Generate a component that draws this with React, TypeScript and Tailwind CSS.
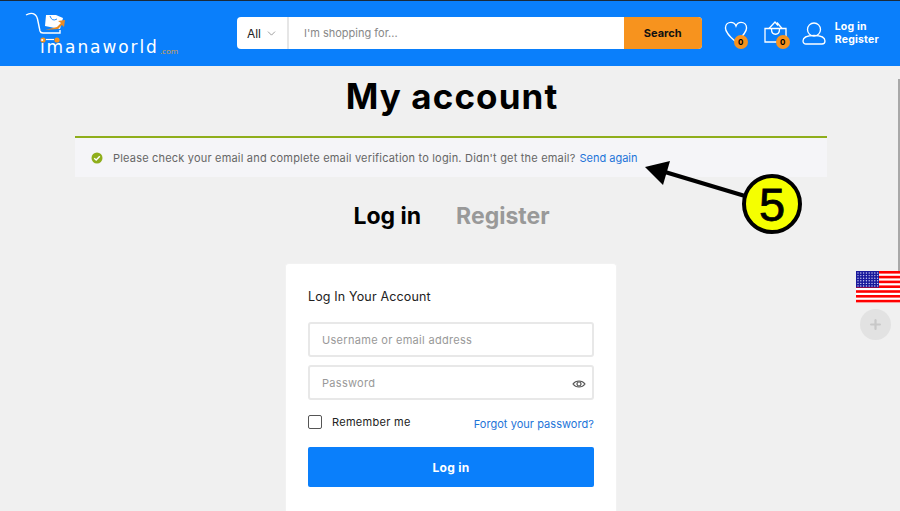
import React from "react";
import { ChevronDown, Plus } from "lucide-react";

function Logo() {
  return (
    <div className="relative w-[155px] h-[56px]">
      <svg width="45" height="40" viewBox="0 0 45 40" className="absolute left-0 top-0">
        <path d="M1 9 C6 6 11 7 12.5 13 L15 25 Q15.5 27 18 27 H35 V24" fill="none" stroke="#fff" strokeWidth="1.4" />
        <path d="M21 9 L31 9 L38 12 L35 23 L20 20 Z" fill="#fff" />
        <path d="M25 10 Q27 16 32 13" fill="none" stroke="#0a7ffb" strokeWidth="0.9" />
        <path d="M20 24 L32 21 L36 17 L33 15 L40 14 L39 21 L37 19 L33 23 Z" fill="#e98b25" />
        <circle cx="18" cy="34" r="2.6" fill="#f7931e" />
        <circle cx="32" cy="34" r="2.6" fill="#f7931e" />
        <path d="M21 33.5 H29" stroke="#fff" strokeWidth="1.2" />
      </svg>
      <span className="absolute left-[15px] top-[30px] text-[17px] leading-[22px] text-white tracking-[1.9px] font-['DejaVu_Sans',sans-serif]">
        imanaworld
      </span>
      <span className="absolute left-[135px] top-[40px] text-[8px] leading-[10px] text-[#d8a04a] font-['Open_Sans',sans-serif]">
        .com
      </span>
    </div>
  );
}

function HeartIcon() {
  return (
    <svg width="24" height="22" viewBox="0 0 26 24" fill="none" stroke="#fff" strokeWidth="1.5" className="block">
      <path d="M13 23 C7 17.5 1.5 13 1.5 7.5 C1.5 3.5 4.5 1.5 7.5 1.5 C10 1.5 12 3 13 5.5 C14 3 16 1.5 18.5 1.5 C22 1.5 24.5 4 24.5 7.5 C24.5 13 19 17.5 13 23 Z" />
    </svg>
  );
}

function BagIcon() {
  return (
    <svg width="23" height="22" viewBox="0 0 23 22" fill="none" stroke="#fff" strokeWidth="1.3" className="block">
      <path d="M1 7.5 H22 V21 H1 Z" />
      <path d="M5 7.5 L11 1 L14 4.5 M13 1.5 L18 7.5" />
      <path d="M7.5 8 C7.5 15 15.5 15 15.5 8" />
    </svg>
  );
}

function UserIcon() {
  return (
    <svg width="24" height="23" viewBox="0 0 24 23" fill="none" stroke="#fff" strokeWidth="1.3" className="block">
      <circle cx="12" cy="7.5" r="6.5" />
      <path d="M1 19 C1 15 6 13.5 12 13.5 C18 13.5 23 15 23 19 C23 21 21.5 22 20 22 H4 C2.5 22 1 21 1 19 Z" />
    </svg>
  );
}

function Header() {
  return (
    <header className="h-[66px] bg-[#0a7ffb] border-t border-t-[#1a2a3a] flex items-center pl-[25px] pr-[21px]">
      <Logo />
      <div className="ml-[57px] mt-[-1px] w-[465px] h-[32px] flex bg-white rounded-[4px] overflow-hidden">
        <div className="w-[52px] pl-[10px] pt-[1px] flex items-center gap-[4px] border-r-2 border-r-[#e6e6e6] text-[12px] text-[#222]">
          All <ChevronDown size={13} strokeWidth={1.3} className="text-[#777]" />
        </div>
        <div className="flex-1 flex items-center pl-[15px] pt-[1px] text-[11px] text-[#888]">I'm shopping for...</div>
        <div className="w-[78px] pt-[1px] bg-[#f7931e] flex items-center justify-center text-[11px] font-bold text-[#111]">Search</div>
      </div>
      <div className="ml-[22px] relative mt-[-3px]">
        <HeartIcon />
        <span className="absolute right-0 bottom-[-6px] w-[14px] h-[14px] rounded-full bg-[#f7931e] text-black text-[8px] font-bold flex items-center justify-center">
          0
        </span>
      </div>
      <div className="ml-[16px] relative mt-[-3px]">
        <BagIcon />
        <span className="absolute right-[-3px] bottom-[-6px] w-[14px] h-[14px] rounded-full bg-[#f7931e] text-black text-[8px] font-bold flex items-center justify-center">
          0
        </span>
      </div>
      <div className="ml-[15px]">
        <UserIcon />
      </div>
      <div className="ml-[9px] text-[10.5px] leading-[12.5px] font-bold text-white tracking-[0.2px]">
        <div>Log in</div>
        <div>Register</div>
      </div>
    </header>
  );
}

function Notice() {
  return (
    <div className="ml-[75px] mr-[73px] mt-[18px] h-[41px] bg-[#f5f5f8] border-t-2 border-t-[#8fae1b] flex items-center pl-[16px] text-[11px] text-[#666] tracking-[0.19px]">
      <svg width="12" height="12" viewBox="0 0 12 12" className="mr-[10px]">
        <circle cx="6" cy="6" r="5.5" fill="#8fae1b" />
        <path d="M3.2 6.2 L5.2 8 L8.8 4.2" fill="none" stroke="#fff" strokeWidth="1.4" />
      </svg>
      <span className="pt-[1px]">Please check your email and complete email verification to login. Didn't get the email?</span>
      <span className="pt-[1px] ml-[4px] text-[#1d74d8] tracking-normal">Send again</span>
    </div>
  );
}

function LoginCard() {
  return (
    <div className="ml-[285px] mt-[33px] w-[332px] h-[260px] bg-white rounded-t-[4px] border border-[#f2f2f2] border-b-0 px-[22px] pt-[25px]">
      <div className="text-[12.5px] leading-[16px] text-[#222] tracking-[0.15px]">Log In Your Account</div>
      <div className="mt-[17px] h-[35px] pt-[1px] border-2 border-[#e8e8e8] rounded-[3px] flex items-center pl-[12px] text-[11px] text-[#999] tracking-[0.3px]">
        Username or email address
      </div>
      <div className="mt-[8px] h-[35px] pt-[1px] border-2 border-[#e8e8e8] rounded-[3px] flex items-center justify-between pl-[12px] pr-[6px] text-[11px] text-[#999] tracking-[0.3px]">
        <span>Password</span>
        <svg width="14" height="10" viewBox="0 0 14 10" fill="none" stroke="#555" strokeWidth="1.2" className="mt-[2px]">
          <path d="M1 5 C4 1 10 1 13 5 C10 9 4 9 1 5 Z" />
          <circle cx="7" cy="5" r="2" />
        </svg>
      </div>
      <div className="mt-[12px] flex items-center justify-between h-[20px]">
        <div className="flex items-center gap-[10px] text-[11px] text-[#222] tracking-[0.3px]">
          <span className="w-[14px] h-[14px] border border-[#555] rounded-[2px] bg-white" />
          Remember me
        </div>
        <span className="mt-[5px] text-[11px] text-[#1d74d8] tracking-[0.05px]">Forgot your password?</span>
      </div>
      <div className="mt-[15px] h-[40px] pt-[1px] bg-[#0a7ffb] rounded-[2px] flex items-center justify-center text-[12px] font-bold text-white tracking-[0.3px]">
        Log in
      </div>
    </div>
  );
}

function Callout() {
  return (
    <svg width="165" height="80" viewBox="0 0 165 80" className="absolute left-[640px] top-[158px]">
      <path d="M105 38 L25 14" stroke="#000" strokeWidth="4" />
      <path d="M5 9 L30 3 L23 27 Z" fill="#000" />
      <circle cx="132" cy="46" r="28" fill="#f5ff00" stroke="#000" strokeWidth="4" />
      <text x="132" y="63" textAnchor="middle" fontSize="47" fontFamily="Liberation Sans, sans-serif" fill="#000" stroke="#000" strokeWidth="0.8">5</text>
    </svg>
  );
}

function FlagWidget() {
  const stars = [];
  for (let row = 0; row < 6; row++) {
    for (let col = 0; col < 8; col++) {
      stars.push(<circle key={`${row}-${col}`} cx={2 + col * 2.8} cy={2 + row * 2.6} r="0.7" fill="#cfd0f5" />);
    }
  }
  return (
    <div className="absolute right-0 top-[271px] w-[44px]">
      <svg width="44" height="32" viewBox="0 0 44 32" className="block">
        <rect width="44" height="32" fill="#fff" />
        {[0, 4.8, 9.6, 14.4, 19.2, 24, 28.8].map((y) => (
          <rect key={y} y={y} width="44" height="2.6" fill="#f00" />
        ))}
        <rect width="23" height="16.5" fill="#1a1a9c" />
        {stars}
      </svg>
      <div className="mt-[6px] ml-[4px] w-[31px] h-[31px] rounded-full bg-[#e2e2e2] flex items-center justify-center">
        <Plus size={15} strokeWidth={3.5} className="text-[#c8c8c8]" />
      </div>
    </div>
  );
}

export default function App() {
  return (
    <div className="relative h-[511px] overflow-hidden bg-[#f0f0f0] font-['Inter',sans-serif]">
      <Header />
      <h1 className="mt-[8px] pl-[4px] text-center text-[35px] leading-[44px] font-bold text-black tracking-[1.1px]">My account</h1>
      <Notice />
      <div className="mt-[25px] pl-[3px] flex justify-center gap-[35px] text-[23px] leading-[28px] font-bold">
        <span className="text-black">Log in</span>
        <span className="text-[#999]">Register</span>
      </div>
      <LoginCard />
      <Callout />
      <div className="absolute right-0 top-[79px] w-[2px] h-[205px] bg-[#a8a8a8]" />
      <FlagWidget />
    </div>
  );
}
